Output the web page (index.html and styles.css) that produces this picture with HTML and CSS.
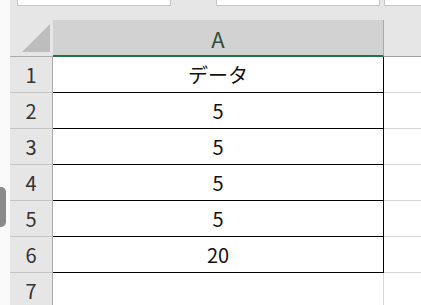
FILE: index.html
```html
<!DOCTYPE html>
<html lang="ja">
<head>
    <meta charset="UTF-8">
    <meta name="viewport" content="width=device-width, initial-scale=1.0">
    <title>Sheet1</title>
    <link rel="stylesheet" href="styles.css">
</head>
<body>
    <div class="side-handle"></div>
    <div class="workbook">
        <!-- Name box / formula bar strip -->
        <div class="toolbar">
            <div class="name-box"></div>
            <div class="formula-box"></div>
            <div class="extra-box"></div>
        </div>

        <!-- Sheet grid -->
        <div class="sheet">
            <div class="corner"><span class="corner-mark"></span></div>
            <div class="col-head selected">A</div>
            <div class="col-head rest"></div>

            <div class="row-head">1</div>
            <div class="cell boxed">データ</div>
            <div class="cell empty"></div>

            <div class="row-head">2</div>
            <div class="cell boxed">5</div>
            <div class="cell empty"></div>

            <div class="row-head">3</div>
            <div class="cell boxed">5</div>
            <div class="cell empty"></div>

            <div class="row-head">4</div>
            <div class="cell boxed">5</div>
            <div class="cell empty"></div>

            <div class="row-head">5</div>
            <div class="cell boxed">5</div>
            <div class="cell empty"></div>

            <div class="row-head">6</div>
            <div class="cell boxed">20</div>
            <div class="cell empty"></div>

            <div class="row-head">7</div>
            <div class="cell plain"></div>
            <div class="cell empty"></div>
        </div>
    </div>
</body>
</html>
```

FILE: styles.css
```css
/* Global styles */
* {
    margin: 0;
    padding: 0;
    box-sizing: border-box;
}

body {
    font-family: "Noto Sans CJK JP", "Noto Sans", sans-serif;
    background: #fafafa;
    width: 421px;
    height: 305px;
    overflow: hidden;
    position: relative;
}

/* Gray grip on the window edge */
.side-handle {
    position: absolute;
    left: 0;
    top: 187px;
    width: 6px;
    height: 40px;
    background: #8a8a8a;
    border-radius: 0 5px 5px 0;
}

.workbook {
    margin-left: 10px;
    height: 305px;
    background: #e6e6e6;
}

/* Top strip */
.toolbar {
    height: 20px;
    display: flex;
    align-items: flex-start;
}

.toolbar div {
    height: 6px;
    background: #fff;
    border: 1px solid #c6c6c6;
    border-top: none;
}

.name-box {
    margin-left: 7px;
    width: 154px;
}

.formula-box {
    margin-left: 45px;
    width: 164px;
}

.extra-box {
    margin-left: 4px;
    flex: 1;
    border-right: none !important;
}

/* Grid */
.sheet {
    display: grid;
    grid-template-columns: 43px 331px 1fr;
    grid-template-rows: 37px repeat(7, 36px);
    font-size: 20px;
}

.corner {
    position: relative;
    border-bottom: 1px solid #ababab;
}

.corner-mark {
    position: absolute;
    right: 3px;
    bottom: 4px;
    width: 28px;
    height: 28px;
    background: #bdbdbd;
    clip-path: polygon(100% 0, 100% 100%, 0 100%);
}

.col-head {
    display: flex;
    align-items: center;
    justify-content: center;
}

.col-head.selected {
    background: #d2d2d2;
    color: #2f4d3d;
    font-size: 22px;
    border-bottom: 2px solid #217346;
    border-right: 1px solid #ababab;
}

.col-head.rest {
    border-bottom: 1px solid #9f9f9f;
}

.row-head {
    display: flex;
    align-items: center;
    justify-content: center;
    color: #333;
    border-right: 1px solid #ababab;
    border-bottom: 1px solid #c4c4c4;
}

.cell {
    display: flex;
    align-items: center;
    justify-content: center;
    background: #fff;
    color: #111;
}

.cell.boxed {
    border-right: 1px solid #000;
    border-bottom: 1px solid #000;
}

.cell.plain {
    border-right: 1px solid #d4d4d4;
}

.cell.empty {
    border-bottom: 1px solid #d4d4d4;
}
```
